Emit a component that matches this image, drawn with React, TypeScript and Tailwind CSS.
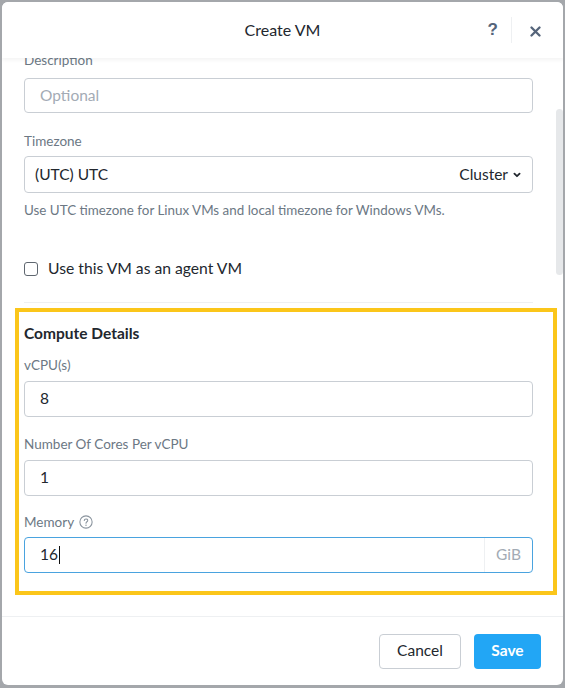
import { useState } from 'react'

const font = { fontFamily: 'Lato, "Open Sans", Arial, sans-serif' }

function Label({ children }: { children: React.ReactNode }) {
  return <div className="h-[18px] text-[13.5px] leading-[18px] text-[#6c7884]">{children}</div>
}

function TextInput({ value, className = '' }: { value: string; className?: string }) {
  return (
    <div
      className={`flex h-[36px] items-center rounded-[4px] border border-[#c9ced4] bg-white px-[15px] text-[15.5px] text-[#22272e] ${className}`}
    >
      {value}
    </div>
  )
}

export default function App() {
  const [agent, setAgent] = useState(false)

  return (
    <div className="h-[688px] w-[565px] bg-[#a4a7ab] pl-[2px] pr-[2px] pt-[2px]" style={font}>
      <div className="flex h-[683px] w-[561px] flex-col overflow-hidden rounded-[6px] bg-white">
        {/* Header */}
        <div className="relative z-10 grid h-[56px] shrink-0 grid-cols-[1fr_auto_1fr] items-center bg-white shadow-[0_2px_4px_rgba(0,0,0,0.05)]">
          <div />
          <div className="text-[16px] text-[#22272e]">Create VM</div>
          <div className="flex items-center justify-end pr-[22px]">
            <span className="text-[17px] font-bold text-[#55647a]" style={{ fontFamily: '"Liberation Sans", Arial, sans-serif' }}>
              ?
            </span>
            <span className="ml-[13px] mr-[18px] h-[26px] w-px bg-[#eef0f2]" />
            <svg width="11" height="11" viewBox="0 0 11 11" className="mt-[2px]">
              <path d="M1.5 1.5 L9.5 9.5 M9.5 1.5 L1.5 9.5" stroke="#55647a" strokeWidth="2.3" strokeLinecap="round" />
            </svg>
          </div>
        </div>

        {/* Scrolling body */}
        <div className="relative flex-1 overflow-hidden">
          <div className="-mt-[7px] pl-[22px] pr-[30px]">
            <Label>Description</Label>
            <div className="mt-[9px] flex h-[35px] items-center rounded-[4px] border border-[#c9ced4] px-[15px] text-[15.5px] text-[#a3abb5]">
              Optional
            </div>

            <div className="mt-[19px]">
              <Label>Timezone</Label>
            </div>
            <div className="mt-[6px] flex h-[37px] items-center justify-between rounded-[4px] border border-[#c9ced4] pl-[10px] pr-[11px] text-[15.5px] text-[#22272e]">
              <span>(UTC) UTC</span>
              <span className="flex items-center gap-[5px]">
                Cluster
                <svg width="8" height="6" viewBox="0 0 8 6">
                  <path d="M1.4 1.6 L4 4.2 L6.6 1.6" fill="none" stroke="#22272e" strokeWidth="1.8" strokeLinecap="round" strokeLinejoin="round" />
                </svg>
              </span>
            </div>
            <div className="mt-[9px] text-[13.4px] leading-[16px] text-[#6c7884]">
              Use UTC timezone for Linux VMs and local timezone for Windows VMs.
            </div>

            <label className="mt-[41px] flex h-[20px] items-center gap-[10px] text-[15.7px] text-[#22272e]">
              <span
                onClick={() => setAgent(!agent)}
                className={`h-[14px] w-[14px] rounded-[3px] border border-[#5f6770] ${agent ? 'bg-[#22a6f5]' : 'bg-white'}`}
              />
              Use this VM as an agent VM
            </label>

            <div className="mt-[23px] h-px bg-[#eef0f2]" />

            {/* Compute details */}
            <div className="-ml-[9px] -mr-[24px] mt-[5px] border-[4px] border-[#fbc61a] pb-[18px] pl-[5px] pr-[20px] pt-[11px]">
              <div className="text-[15.5px] font-bold leading-[20px] text-[#22272e]">Compute Details</div>

              <div className="mt-[13px]">
                <Label>vCPU(s)</Label>
              </div>
              <TextInput value="8" className="mt-[7px]" />

              <div className="mt-[18px]">
                <Label>Number Of Cores Per vCPU</Label>
              </div>
              <TextInput value="1" className="mt-[7px]" />

              <div className="mt-[17px] flex items-center gap-[5px]">
                <Label>Memory</Label>
                <svg width="14" height="14" viewBox="0 0 13 13">
                  <circle cx="6.5" cy="6.5" r="5.7" fill="none" stroke="#8a949e" strokeWidth="1" />
                  <path d="M4.9 5.1 C4.9 3.2 8.1 3.2 8.1 5 C8.1 6.2 6.5 6.3 6.5 7.6" fill="none" stroke="#8a949e" strokeWidth="1" strokeLinecap="round" />
                  <circle cx="6.5" cy="9.5" r="0.65" fill="#8a949e" />
                </svg>
              </div>
              <div className="mt-[6px] flex h-[36px] items-center rounded-[4px] border border-[#4aa3df] text-[15.5px] text-[#22272e]">
                <div className="flex flex-1 items-center pl-[15px]">
                  16<span className="ml-px h-[18px] w-px bg-[#111]" />
                </div>
                <div className="flex h-full items-center border-l border-[#eef0f2] px-[11px] text-[#a3abb5]">GiB</div>
              </div>
            </div>
          </div>

          {/* scrollbar thumb */}
          <div className="absolute right-0 top-[51px] h-[166px] w-[7px] rounded-full bg-[#e6e8ea]" />
        </div>

        {/* Footer */}
        <div className="flex h-[69px] shrink-0 items-center justify-end gap-[13px] border-t border-[#eef0f2] pr-[22px]">
          <button className="h-[35px] w-[82px] rounded-[4px] border border-[#c9ced4] bg-white text-[15.5px] text-[#22272e]">
            Cancel
          </button>
          <button className="h-[35px] w-[67px] rounded-[4px] bg-[#22a6f5] text-[15.5px] font-bold text-white">Save</button>
        </div>
      </div>
    </div>
  )
}
